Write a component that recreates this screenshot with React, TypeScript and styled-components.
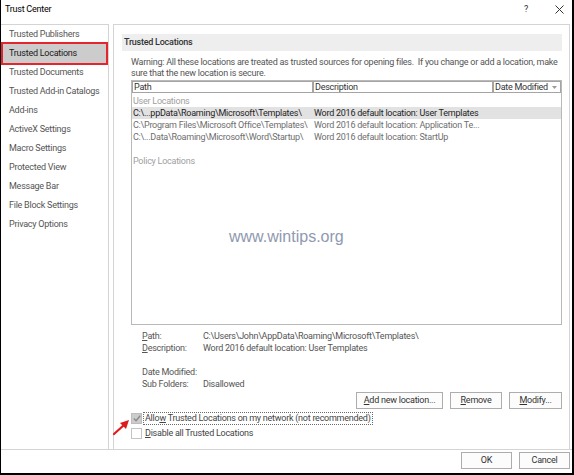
import React from "react";
import styled, { createGlobalStyle } from "styled-components";

const FONT = `"Roboto", "Liberation Sans", sans-serif`;

const GlobalStyle = createGlobalStyle`
  html, body { margin: 0; padding: 0; background: #fff; }
  body { font-family: ${FONT}; font-size: 9px; letter-spacing: -0.25px; color: #333; }
  * { box-sizing: border-box; }
`;

const Dialog = styled.div`
  width: 574px;
  height: 475px;
  border-left: 1px solid #000;
  border-right: 2px solid #000;
  border-bottom: 2px solid #000;
  background: #fff;
  display: flex;
  flex-direction: column;
  overflow: hidden;
`;

const TitleBar = styled.div`
  height: 24px;
  flex: none;
  display: flex;
  align-items: flex-start;
  padding: 3px 8px 0 4px;
  line-height: 12px;
  color: #000;
`;

const Title = styled.div`
  flex: 1;
`;

const TitleIcons = styled.div`
  display: flex;
  align-items: center;
  gap: 27px;
  height: 12px;
  color: #333;
`;

const Body = styled.div`
  flex: 1;
  display: flex;
  gap: 4px;
  padding-right: 2px;
  min-height: 0;
`;

const Nav = styled.div`
  width: 108px;
  flex: none;
  border-top: 1px solid #d4d4d4;
  border-right: 1px solid #d4d4d4;
`;

const NavItem = styled.div<{ $active?: boolean }>`
  height: 19px;
  line-height: 19px;
  margin: 0 2px;
  padding-left: 6px;
  white-space: nowrap;
  color: ${(p) => (p.$active ? "#1a1a1a" : "#555")};
  background: ${(p) => (p.$active ? "#cccccc" : "transparent")};
  outline: ${(p) => (p.$active ? "2px solid #e3262e" : "none")};
`;

const Main = styled.div`
  flex: 1;
  min-width: 0;
  position: relative;
  border: 1px solid #d4d4d4;
  border-bottom: none;
  padding: 9px 7px 0 8px;
  display: flex;
  flex-direction: column;
`;

const SectionHeader = styled.div`
  height: 17px;
  line-height: 17px;
  background: #eeeeee;
  padding-left: 2px;
  font-weight: 500;
  color: #333;
`;

const Content = styled.div`
  padding-left: 9px;
  display: flex;
  flex-direction: column;
`;

const Warning = styled.div`
  margin-top: 6px;
  line-height: 11px;
  color: #555;
  white-space: nowrap;
  overflow: hidden;
`;

const Table = styled.div`
  margin-top: 1px;
  height: 245px;
  border: 1px solid #b9b9b9;
`;

const HeaderRow = styled.div`
  display: grid;
  grid-template-columns: 181px 180px 1fr;
  height: 12px;
`;

const HeaderCell = styled.div`
  border: 1px solid #a4a4a4;
  line-height: 10px;
  padding-left: 1px;
  color: #333;
  display: flex;
  align-items: center;
  justify-content: space-between;
  padding-right: 3px;
`;

const Rows = styled.div`
  padding-top: 2px;
`;

const GroupLabel = styled.div`
  height: 12px;
  line-height: 12px;
  padding-left: 1px;
  color: #a0a0a0;
`;

const Row = styled.div<{ $selected?: boolean }>`
  display: grid;
  grid-template-columns: 181px 180px 1fr;
  height: 12px;
  line-height: 12px;
  padding-left: 1px;
  white-space: nowrap;
  color: ${(p) => (p.$selected ? "#1e1e1e" : "#6e6e6e")};
  background: ${(p) => (p.$selected ? "#e2e2e2" : "transparent")};
`;

const Spacer = styled.div<{ $h: number }>`
  height: ${(p) => p.$h}px;
`;

const Watermark = styled.div`
  position: absolute;
  left: 115px;
  top: 203px;
  font-family: "Liberation Sans", Arial, sans-serif;
  font-size: 16px;
  letter-spacing: 0;
  line-height: 18px;
  color: #8f99b0;
`;

const Details = styled.div`
  margin-top: 5px;
  padding-left: 11px;
  display: grid;
  grid-template-columns: 61px 1fr;
  grid-auto-rows: 12px;
  line-height: 12px;
  color: #555;
  white-space: nowrap;
`;

const ButtonRow = styled.div`
  margin-top: 2px;
  display: flex;
  justify-content: flex-end;
  gap: 7px;
`;

const Button = styled.div<{ $w: number }>`
  width: ${(p) => p.$w}px;
  height: 17px;
  line-height: 15px;
  border: 1px solid #adadad;
  background: #fcfcfc;
  text-align: center;
  color: #333;
`;

const Checks = styled.div`
  margin-top: 2px;
  display: flex;
  flex-direction: column;
`;

const CheckRow = styled.div`
  display: flex;
  align-items: center;
  height: 15px;
  gap: 1px;
`;

const Box = styled.span<{ $checked?: boolean }>`
  width: 11px;
  height: 11px;
  flex: none;
  border: 1px solid ${(p) => (p.$checked ? "#bdbdbd" : "#c4c4c4")};
  background: ${(p) => (p.$checked ? "#cccccc" : "#fff")};
  display: flex;
  align-items: center;
  justify-content: center;
`;

const CheckLabel = styled.span<{ $focused?: boolean }>`
  border: 1px dotted ${(p) => (p.$focused ? "#6a6a6a" : "transparent")};
  padding: 0 1px 0 1px;
  line-height: 11px;
  color: #444;
  white-space: nowrap;
`;

const Arrow = styled.svg`
  position: absolute;
  left: -4px;
  top: 391px;
`;

const Footer = styled.div`
  height: 24px;
  flex: none;
  border-top: 1px solid #d4d4d4;
  display: flex;
  justify-content: flex-end;
  gap: 7px;
  padding: 2px 2px 0 0;
`;

const navItems = [
  "Trusted Publishers",
  "Trusted Locations",
  "Trusted Documents",
  "Trusted Add-in Catalogs",
  "Add-ins",
  "ActiveX Settings",
  "Macro Settings",
  "Protected View",
  "Message Bar",
  "File Block Settings",
  "Privacy Options",
];

const locations = [
  { path: "C:\\...ppData\\Roaming\\Microsoft\\Templates\\", desc: "Word 2016 default location: User Templates", selected: true },
  { path: "C:\\Program Files\\Microsoft Office\\Templates\\", desc: "Word 2016 default location: Application Te..." },
  { path: "C:\\...Data\\Roaming\\Microsoft\\Word\\Startup\\", desc: "Word 2016 default location: StartUp" },
];

export default function App() {
  return (
    <>
      <GlobalStyle />
      <Dialog>
        <TitleBar>
          <Title>Trust Center</Title>
          <TitleIcons>
            <span>?</span>
            <svg width="9" height="9" viewBox="0 0 9 9">
              <path d="M0.5 0.5 L8.5 8.5 M8.5 0.5 L0.5 8.5" stroke="#333" strokeWidth="1" />
            </svg>
          </TitleIcons>
        </TitleBar>
        <Body>
          <Nav>
            {navItems.map((n) => (
              <NavItem key={n} $active={n === "Trusted Locations"}>
                {n}
              </NavItem>
            ))}
          </Nav>
          <Main>
            <SectionHeader>Trusted Locations</SectionHeader>
            <Content>
              <Warning>
                Warning: All these locations are treated as trusted sources for opening files.&nbsp; If you change or add a location, make
                <br />
                sure that the new location is secure.
              </Warning>
              <Table>
                <HeaderRow>
                  <HeaderCell>Path</HeaderCell>
                  <HeaderCell>Description</HeaderCell>
                  <HeaderCell>
                    Date Modified
                    <svg width="5" height="3" viewBox="0 0 5 3">
                      <path d="M0 0 L5 0 L2.5 3 Z" fill="#999" />
                    </svg>
                  </HeaderCell>
                </HeaderRow>
                <Rows>
                  <GroupLabel>User Locations</GroupLabel>
                  {locations.map((l) => (
                    <Row key={l.path} $selected={l.selected}>
                      <span>{l.path}</span>
                      <span>{l.desc}</span>
                      <span />
                    </Row>
                  ))}
                  <Spacer $h={12} />
                  <GroupLabel>Policy Locations</GroupLabel>
                </Rows>
              </Table>
              <Details>
                <span><u>P</u>ath:</span>
                <span>C:\Users\John\AppData\Roaming\Microsoft\Templates\</span>
                <span><u>D</u>escription:</span>
                <span>Word 2016 default location: User Templates</span>
                <span />
                <span />
                <span>Date Modified:</span>
                <span />
                <span>Sub Folders:</span>
                <span>Disallowed</span>
              </Details>
              <ButtonRow>
                <Button $w={87}><u>A</u>dd new location...</Button>
                <Button $w={52}><u>R</u>emove</Button>
                <Button $w={53}><u>M</u>odify...</Button>
              </ButtonRow>
              <Checks>
                <CheckRow>
                  <Box $checked>
                    <svg width="8" height="7" viewBox="0 0 8 7">
                      <path d="M0.8 3.6 L3 5.8 L7.2 0.8" stroke="#8a8a8a" strokeWidth="1.4" fill="none" />
                    </svg>
                  </Box>
                  <CheckLabel $focused>
                    Allo<u>w</u> Trusted Locations on my network (not recommended)
                  </CheckLabel>
                </CheckRow>
                <CheckRow>
                  <Box />
                  <CheckLabel>
                    <u>D</u>isable all Trusted Locations
                  </CheckLabel>
                </CheckRow>
              </Checks>
            </Content>
            <Watermark>www.wintips.org</Watermark>
            <Arrow width="24" height="20" viewBox="0 0 24 20">
              <path d="M4 18 L14 9" stroke="#e01b1b" strokeWidth="2.2" strokeLinecap="round" />
              <path d="M19 4 L10 7 L16 13 Z" fill="#e01b1b" />
            </Arrow>
          </Main>
        </Body>
        <Footer>
          <Button $w={51}>OK</Button>
          <Button $w={51}>Cancel</Button>
        </Footer>
      </Dialog>
    </>
  );
}
